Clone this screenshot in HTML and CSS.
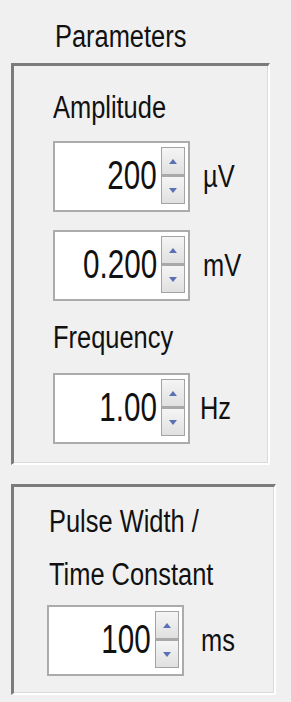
FILE: index.html
```html
<!DOCTYPE html>
<html lang="en">
<head>
  <meta charset="UTF-8" />
  <meta name="viewport" content="width=device-width, initial-scale=1.0" />
  <title>Parameters</title>
  <link rel="stylesheet" href="styles.css">
</head>
<body>
  <div class="title">Parameters</div>

  <div class="group group-main">
    <div class="label">Amplitude</div>
    <div class="row">
      <div class="spin">
        <span class="value">200</span>
        <div class="arrows">
          <div class="btn"><span class="up"></span></div>
          <div class="btn"><span class="down"></span></div>
        </div>
      </div>
      <span class="unit">µV</span>
    </div>
    <div class="row">
      <div class="spin">
        <span class="value">0.200</span>
        <div class="arrows">
          <div class="btn"><span class="up"></span></div>
          <div class="btn"><span class="down"></span></div>
        </div>
      </div>
      <span class="unit">mV</span>
    </div>
    <div class="label label-gap">Frequency</div>
    <div class="row row-loose">
      <div class="spin">
        <span class="value">1.00</span>
        <div class="arrows">
          <div class="btn"><span class="up"></span></div>
          <div class="btn"><span class="down"></span></div>
        </div>
      </div>
      <span class="unit unit-near">Hz</span>
    </div>
  </div>

  <div class="group group-pulse">
    <div class="label">Pulse Width /</div>
    <div class="label label-second">Time Constant</div>
    <div class="row row-tight">
      <div class="spin">
        <span class="value">100</span>
        <div class="arrows">
          <div class="btn"><span class="up"></span></div>
          <div class="btn"><span class="down"></span></div>
        </div>
      </div>
      <span class="unit unit-far">ms</span>
    </div>
  </div>
</body>
</html>
```

FILE: styles.css
```css
body {
  margin: 0;
  padding: 22px 0 0 11px;
  background-color: #f0f0f0;
  color: #111;
  font-family: "Liberation Sans", Arial, sans-serif;
  font-size: 31px;
  line-height: 30px;
  width: 280px;
  height: 702px;
  box-sizing: border-box;
}
/* the original text is tall and condensed, squeeze it sideways */
.title, .label {
  transform: scaleX(0.82);
  transform-origin: left center;
}
.title {
  margin-left: 44px;
}
.group {
  margin-top: 11px;
  border-top: 3px solid #7b7b7b;
  border-left: 3px solid #7b7b7b;
  border-right: 2px solid #fff;
  border-bottom: 2px solid #fff;
  box-shadow: inset -1px -1px 0 #dadada;
}
.group-main {
  width: 259px;
  height: 402px;
  padding: 27px 0 0 39px;
  box-sizing: border-box;
}
.group-pulse {
  margin-top: 19px;
  width: 265px;
  height: 211px;
  padding: 20px 0 0 35px;
  box-sizing: border-box;
}
.label-gap {
  margin-top: 22px;
}
.label-second {
  margin-top: 23px;
}
.row {
  margin-top: 18px;
  display: flex;
  align-items: center;
}
.row-loose {
  margin-top: 20px;
}
.row-tight {
  margin-top: 15px;
}
.group-pulse .row {
  margin-left: -2px;
}
.spin {
  width: 137px;
  height: 71px;
  box-sizing: border-box;
  border: 2px solid #ababab;
  background: #fff;
  display: flex;
  align-items: center;
  justify-content: flex-end;
  padding: 4px 3px 7px 0;
}
.value {
  display: inline-block;
  font-size: 40px;
  line-height: 40px;
  margin-right: 4px;
  transform: scaleX(0.74);
  transform-origin: right center;
}
.arrows {
  width: 24px;
  height: 57px;
  display: flex;
  flex-direction: column;
  gap: 3px;
  background: #a9a9a9;
  border: 1px solid #a3a3a3;
  box-sizing: border-box;
  align-self: flex-start;
}
.btn {
  flex: 1;
  background: linear-gradient(#f5f5f5, #e0e0e0);
  display: flex;
  align-items: center;
  justify-content: center;
}
.up, .down {
  width: 0;
  height: 0;
  border-left: 4px solid transparent;
  border-right: 4px solid transparent;
}
.up {
  border-bottom: 5px solid #5b6fb5;
}
.down {
  border-top: 5px solid #5b6fb5;
}
.unit {
  display: inline-block;
  margin-left: 13px;
  transform: scaleX(0.82);
  transform-origin: left center;
}
.unit-near {
  margin-left: 10px;
}
.unit-far {
  margin-left: 17px;
}
```
